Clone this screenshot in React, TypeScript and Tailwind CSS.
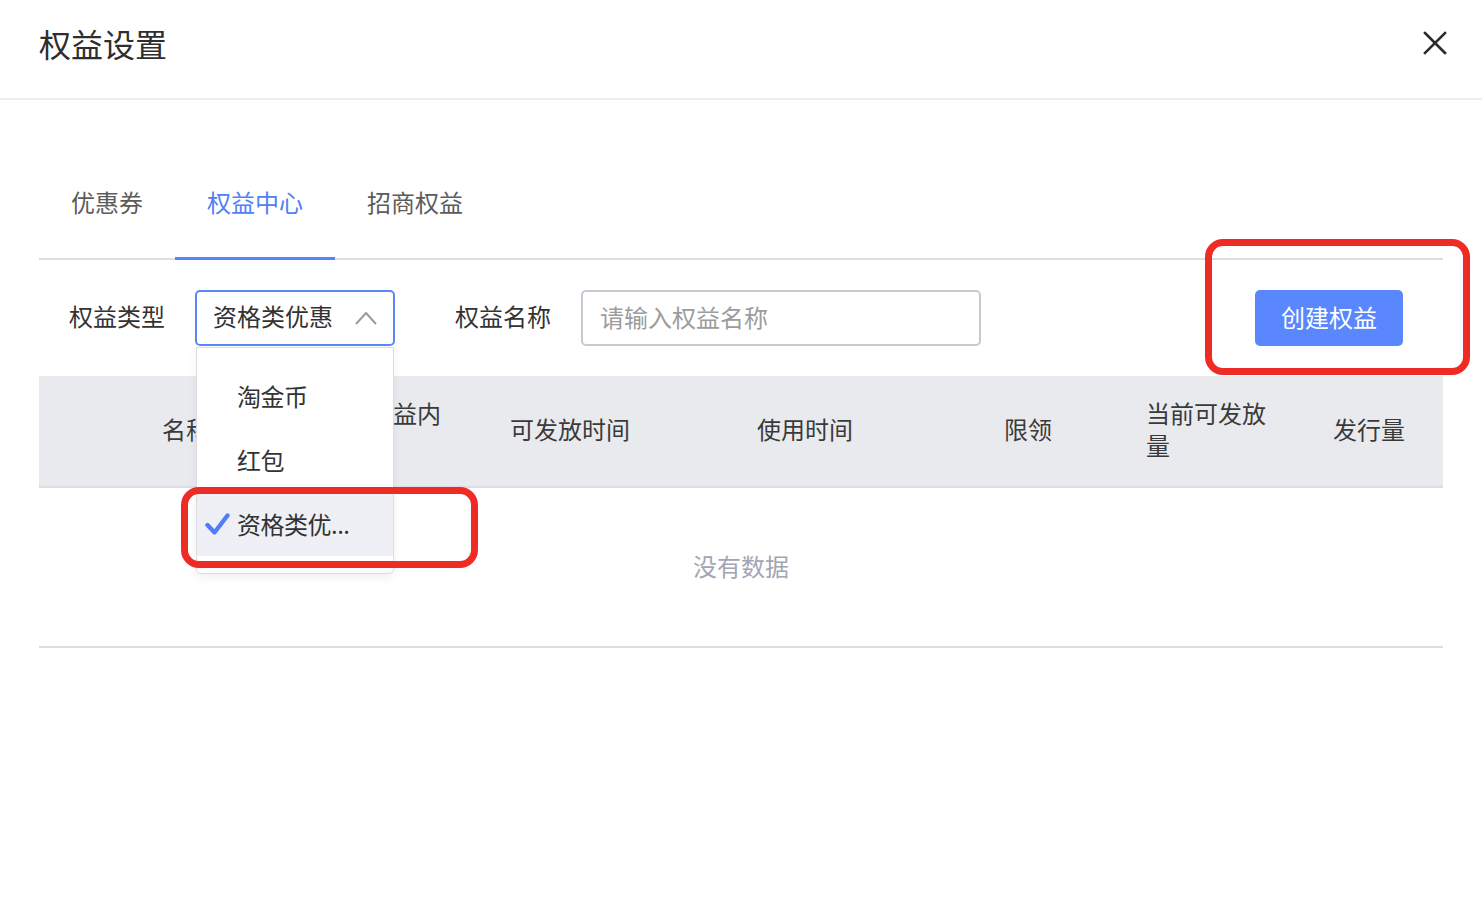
import { useState } from 'react';

const tabs = ['优惠券', '权益中心', '招商权益'];
const options = ['淘金币', '红包', '资格类优惠'];

function CloseIcon() {
  return (
    <svg width="24" height="24" viewBox="0 0 24 24" fill="none">
      <path d="M2 2L22 22M22 2L2 22" stroke="#2b2b2b" strokeWidth="2.6" strokeLinecap="square" />
    </svg>
  );
}

function ChevronUp() {
  return (
    <svg width="22" height="14" viewBox="0 0 22 14" fill="none">
      <path d="M1 13L11 2L21 13" stroke="#9a9a9a" strokeWidth="2" />
    </svg>
  );
}

function Check() {
  return (
    <svg width="25" height="24" viewBox="0 0 25 24" fill="none">
      <path d="M2.5 13L9.5 20.5L22.5 3.5" stroke="#4f7ff8" strokeWidth="4.4" strokeLinecap="round" strokeLinejoin="round" />
    </svg>
  );
}

// option labels longer than 4 chars get cut with dots, like the menu does
const shortLabel = (s: string) => (s.length > 4 ? s.slice(0, 4) + '...' : s);

export default function App() {
  const [activeTab, setActiveTab] = useState(1);
  const [selected, setSelected] = useState(2);
  const [name, setName] = useState('');

  return (
    <div
      className="w-[1482px] h-[908px] bg-white text-[#333333] overflow-hidden"
      style={{ fontFamily: '"Noto Sans CJK SC", "Noto Sans", sans-serif' }}
    >
      {/* header */}
      <div className="h-[100px] border-b-2 border-[#eeeeef] flex items-center justify-between pl-[39px] pr-[35px] pb-[12px]">
        <h1 className="text-[32px] leading-none text-[#2e2e2e]">权益设置</h1>
        <button className="p-0">
          <CloseIcon />
        </button>
      </div>

      <div className="px-[39px]">
        {/* tabs */}
        <div className="mt-[84px] flex border-b-2 border-[#dddde3]">
          {tabs.map((t, i) => (
            <button
              key={t}
              onClick={() => setActiveTab(i)}
              className={
                'px-[32px] pb-[37px] text-[24px] leading-[36px] -mb-[2px] border-b-[3px] ' +
                (i === activeTab
                  ? 'border-[#5585fa] text-[#4f80f7]'
                  : 'border-transparent text-[#5c5c5c]')
              }
            >
              {t}
            </button>
          ))}
        </div>

        {/* filters */}
        <div className="relative mt-[30px] flex items-center pl-[30px] pr-[40px]">
          <span className="text-[24px] leading-[36px] pb-[4px]">权益类型</span>
          <div className="relative ml-[30px]">
            <div className="w-[200px] h-[56px] border-2 border-[#5b87f8] rounded-[5px] flex items-center justify-between pl-[16px] pr-[16px] pb-[4px]">
              <span className="text-[24px] leading-[36px]">{options[selected]}</span>
              <span className="pt-[4px]">
                <ChevronUp />
              </span>
            </div>

            {/* dropdown */}
            <div className="absolute z-10 left-[1px] top-[57px] w-[198px] bg-white border border-[#dcdde3] rounded-b-[5px] shadow-[0_4px_10px_rgba(0,0,0,0.06)] pt-[16px] pb-[17px]">
              {options.map((o, i) => (
                <div
                  key={o}
                  onClick={() => setSelected(i)}
                  className={
                    'relative h-[64px] flex items-center pl-[40px] text-[24px] leading-[36px] ' +
                    (i === selected ? 'bg-[#eff0f5]' : '')
                  }
                >
                  {i === selected && (
                    <span className="absolute left-[8px] top-[20px]">
                      <Check />
                    </span>
                  )}
                  <span className="whitespace-nowrap tracking-[-0.5px]">{shortLabel(o)}</span>
                </div>
              ))}
            </div>

            {/* annotation around selected option */}
            <div className="absolute z-20 left-[-14px] top-[197px] w-[297px] h-[81px] border-[7px] border-[#ef2b25] rounded-[18px] pointer-events-none" />
          </div>

          <span className="ml-[60px] text-[24px] leading-[36px] pb-[4px]">权益名称</span>
          <input
            value={name}
            onChange={(e) => setName(e.target.value)}
            placeholder="请输入权益名称"
            className="ml-[30px] w-[400px] h-[56px] border-2 border-[#c8cad3] rounded-[5px] px-[17px] pb-[4px] text-[24px] placeholder:text-[#9c9c9c] outline-none"
          />

          <button className="ml-auto w-[148px] h-[56px] rounded-[5px] bg-[#5a87fd] text-white text-[24px] pb-[3px]">
            创建权益
          </button>

          {/* annotation around create button */}
          <div className="absolute right-[-27px] top-[-51px] w-[265px] h-[136px] border-[7px] border-[#ef2b25] rounded-[18px] pointer-events-none" />
        </div>

        {/* table */}
        <div className="mt-[30px]">
          <div className="h-[112px] bg-[#e9eaee] border-b-2 border-[#dcdde2] grid grid-cols-[207px_141px_247px_247px_142px_187px_1fr] items-center pl-[123px] pb-[4px] text-[24px] leading-[32px] text-[#3a3a3a]">
            <div>名称</div>
            <div className="w-[90px]">权益内容</div>
            <div>可发放时间</div>
            <div>使用时间</div>
            <div>限领</div>
            <div className="w-[125px]">当前可发放量</div>
            <div>发行量</div>
          </div>
          <div className="h-[160px] border-b-2 border-[#dcdce2] flex items-center justify-center pb-[2px]">
            <span className="text-[24px] text-[#a2a5b3]">没有数据</span>
          </div>
        </div>
      </div>
    </div>
  );
}
